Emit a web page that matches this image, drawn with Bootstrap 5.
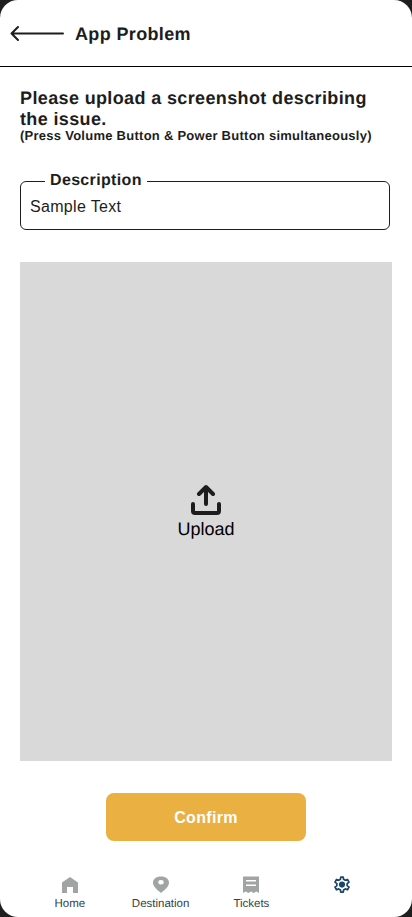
<!DOCTYPE html>
<html lang="en">
<head>
<meta charset="utf-8">
<meta name="viewport" content="width=device-width, initial-scale=1">
<title>App Problem</title>
<link href="https://cdn.jsdelivr.net/npm/bootstrap@5.3.0/dist/css/bootstrap.min.css" rel="stylesheet">
<style>
body{background:#1e1e1e;color:#1d1d20;font-family:"Liberation Sans",Arial,sans-serif;letter-spacing:.02em;text-rendering:geometricPrecision}
svg{display:block;flex:none}
.screen{width:412px;height:917px;border-radius:18px}
.topbar{height:67px;border-bottom:1px solid #000;padding:1px 0 0 10px}
.topbar h1{font-size:18px;margin-left:11px;padding-top:2px;letter-spacing:.02em}
.intro{padding:20.5px 20px 0}
.intro h2{font-size:18px;line-height:21px;letter-spacing:.37px}
.intro p{font-size:13px;line-height:13px;margin-top:-1px;letter-spacing:.26px}
.field{height:50px;width:370px;margin:38px 0 0 20px}
.field fieldset{height:59px;margin-top:-9px;border:1px solid #1d1d20;border-radius:6px;padding:0 9px}
.field legend{float:none;width:auto;font-size:16px;line-height:18px;margin-left:15px;padding:1px 5px 2px;letter-spacing:.34px}
.field input{font-size:16px;line-height:20px;margin-top:5.5px;color:#1d1d20;outline:0;letter-spacing:.32px}
.drop{height:499px;margin:32px 20px 0;background:#d9d9d9;font-size:18px;line-height:21px;color:#000;letter-spacing:0;padding-top:2px}
.drop svg{margin-bottom:3px}
.confirm{width:200px;height:48px;margin-top:32px;border-radius:8px;font-size:16px;letter-spacing:.02em;--bs-btn-bg:#eab042;--bs-btn-color:#fff;--bs-btn-hover-bg:#dda337;--bs-btn-hover-color:#fff}
.confirm span{display:block;padding-top:2px}
.tabs{padding:34px 24.5px 0;font-size:11.5px;line-height:13px;letter-spacing:0}
.tabs a{width:90.8px;color:#35433f}
.tabs svg{margin-bottom:3px}
</style>
<script src="https://cdn.jsdelivr.net/npm/bootstrap@5.3.0/dist/js/bootstrap.bundle.min.js"></script>
</head>
<body>
<div class="screen bg-white overflow-hidden d-flex flex-column">
  <header class="topbar d-flex align-items-center flex-shrink-0">
    <svg width="54" height="18" viewBox="0 0 54 18" fill="none" stroke="#1d1d20" stroke-width="2" stroke-linecap="round" stroke-linejoin="round"><path d="M53 8.500H1.500M8 2 1.500 8.500 8 15"/></svg>
    <h1 class="fw-bold mb-0">App Problem</h1>
  </header>
  <section class="intro">
    <h2 class="fw-bold mb-0">Please upload a screenshot describing the issue.</h2>
    <p class="fw-bold mb-0 text-nowrap">(Press Volume Button &amp; Power Button simultaneously)</p>
  </section>
  <div class="field">
    <fieldset>
      <legend class="fw-bold mb-0">Description</legend>
      <input class="border-0 p-0 w-100 bg-transparent d-block" type="text" value="Sample Text" aria-label="Description">
    </fieldset>
  </div>
  <div class="drop d-flex flex-column align-items-center justify-content-center flex-shrink-0" role="button">
    <svg width="32" height="32" viewBox="0 0 32 32" fill="none" stroke="#1d1d1d" stroke-width="4" stroke-linecap="round" stroke-linejoin="round"><path d="M16 20V4M9 10l7-7 7 7M3 20v7q0 2 2 2h22q2 0 2-2v-7"/></svg>
    <span>Upload</span>
  </div>
  <button class="btn confirm border-0 fw-bold align-self-center p-0 flex-shrink-0" type="button"><span>Confirm</span></button>
  <nav class="tabs d-flex">
    <a class="d-flex flex-column align-items-center text-decoration-none" href="#">
      <svg width="20" height="20" viewBox="0 0 20 20" fill="#a0a5a3"><path d="M2 7.500 10 2l8 5.500V18h-5v-6H7v6H2z"/></svg>Home</a>
    <a class="d-flex flex-column align-items-center text-decoration-none" href="#">
      <svg width="20" height="20" viewBox="0 0 20 20" fill="#a0a5a3"><path fill-rule="evenodd" d="M10 1.500c5 0 8 2.500 8 6.300 0 4-4.500 7.200-8 10.200-3.500-3-8-6.200-8-10.200C2 4 5 1.500 10 1.500zM10 5a2.700 2.200 0 1 0 0 4.400A2.700 2.200 0 0 0 10 5z"/></svg>Destination</a>
    <a class="d-flex flex-column align-items-center text-decoration-none" href="#">
      <svg width="20" height="20" viewBox="0 0 20 20" fill="#a0a5a3"><path fill-rule="evenodd" d="M2 1.500h16V18l-2.700-1.500-2.600 1.500-2.700-1.500L7.300 18l-2.600-1.500L2 18zM5 5v1.500h10V5zM5 9.500V11h10V9.500z"/></svg>Tickets</a>
    <a class="d-flex flex-column align-items-center text-decoration-none" href="#" aria-label="Settings">
      <svg width="20" height="20" viewBox="-.8 -.3 25.600 25.600" fill="none" stroke="#1c4668" stroke-width="2.200" stroke-linejoin="round"><path d="M18.600 13.300V10.700L21 8.800 19 5.400 16.200 6.500 14 5.200 13.600 2.300H10.400L10 5.200 7.800 6.500 5 5.400 3 8.800 5.400 10.700V13.300L3 15.200 5 18.600 7.800 17.500 10 18.800 10.400 21.700H13.600L14 18.800 16.200 17.500 19 18.600 21 15.200z"/><circle cx="12" cy="12" r="3.900" fill="#1c4668" stroke="none"/></svg></a>
  </nav>
</div>
</body>
</html>
